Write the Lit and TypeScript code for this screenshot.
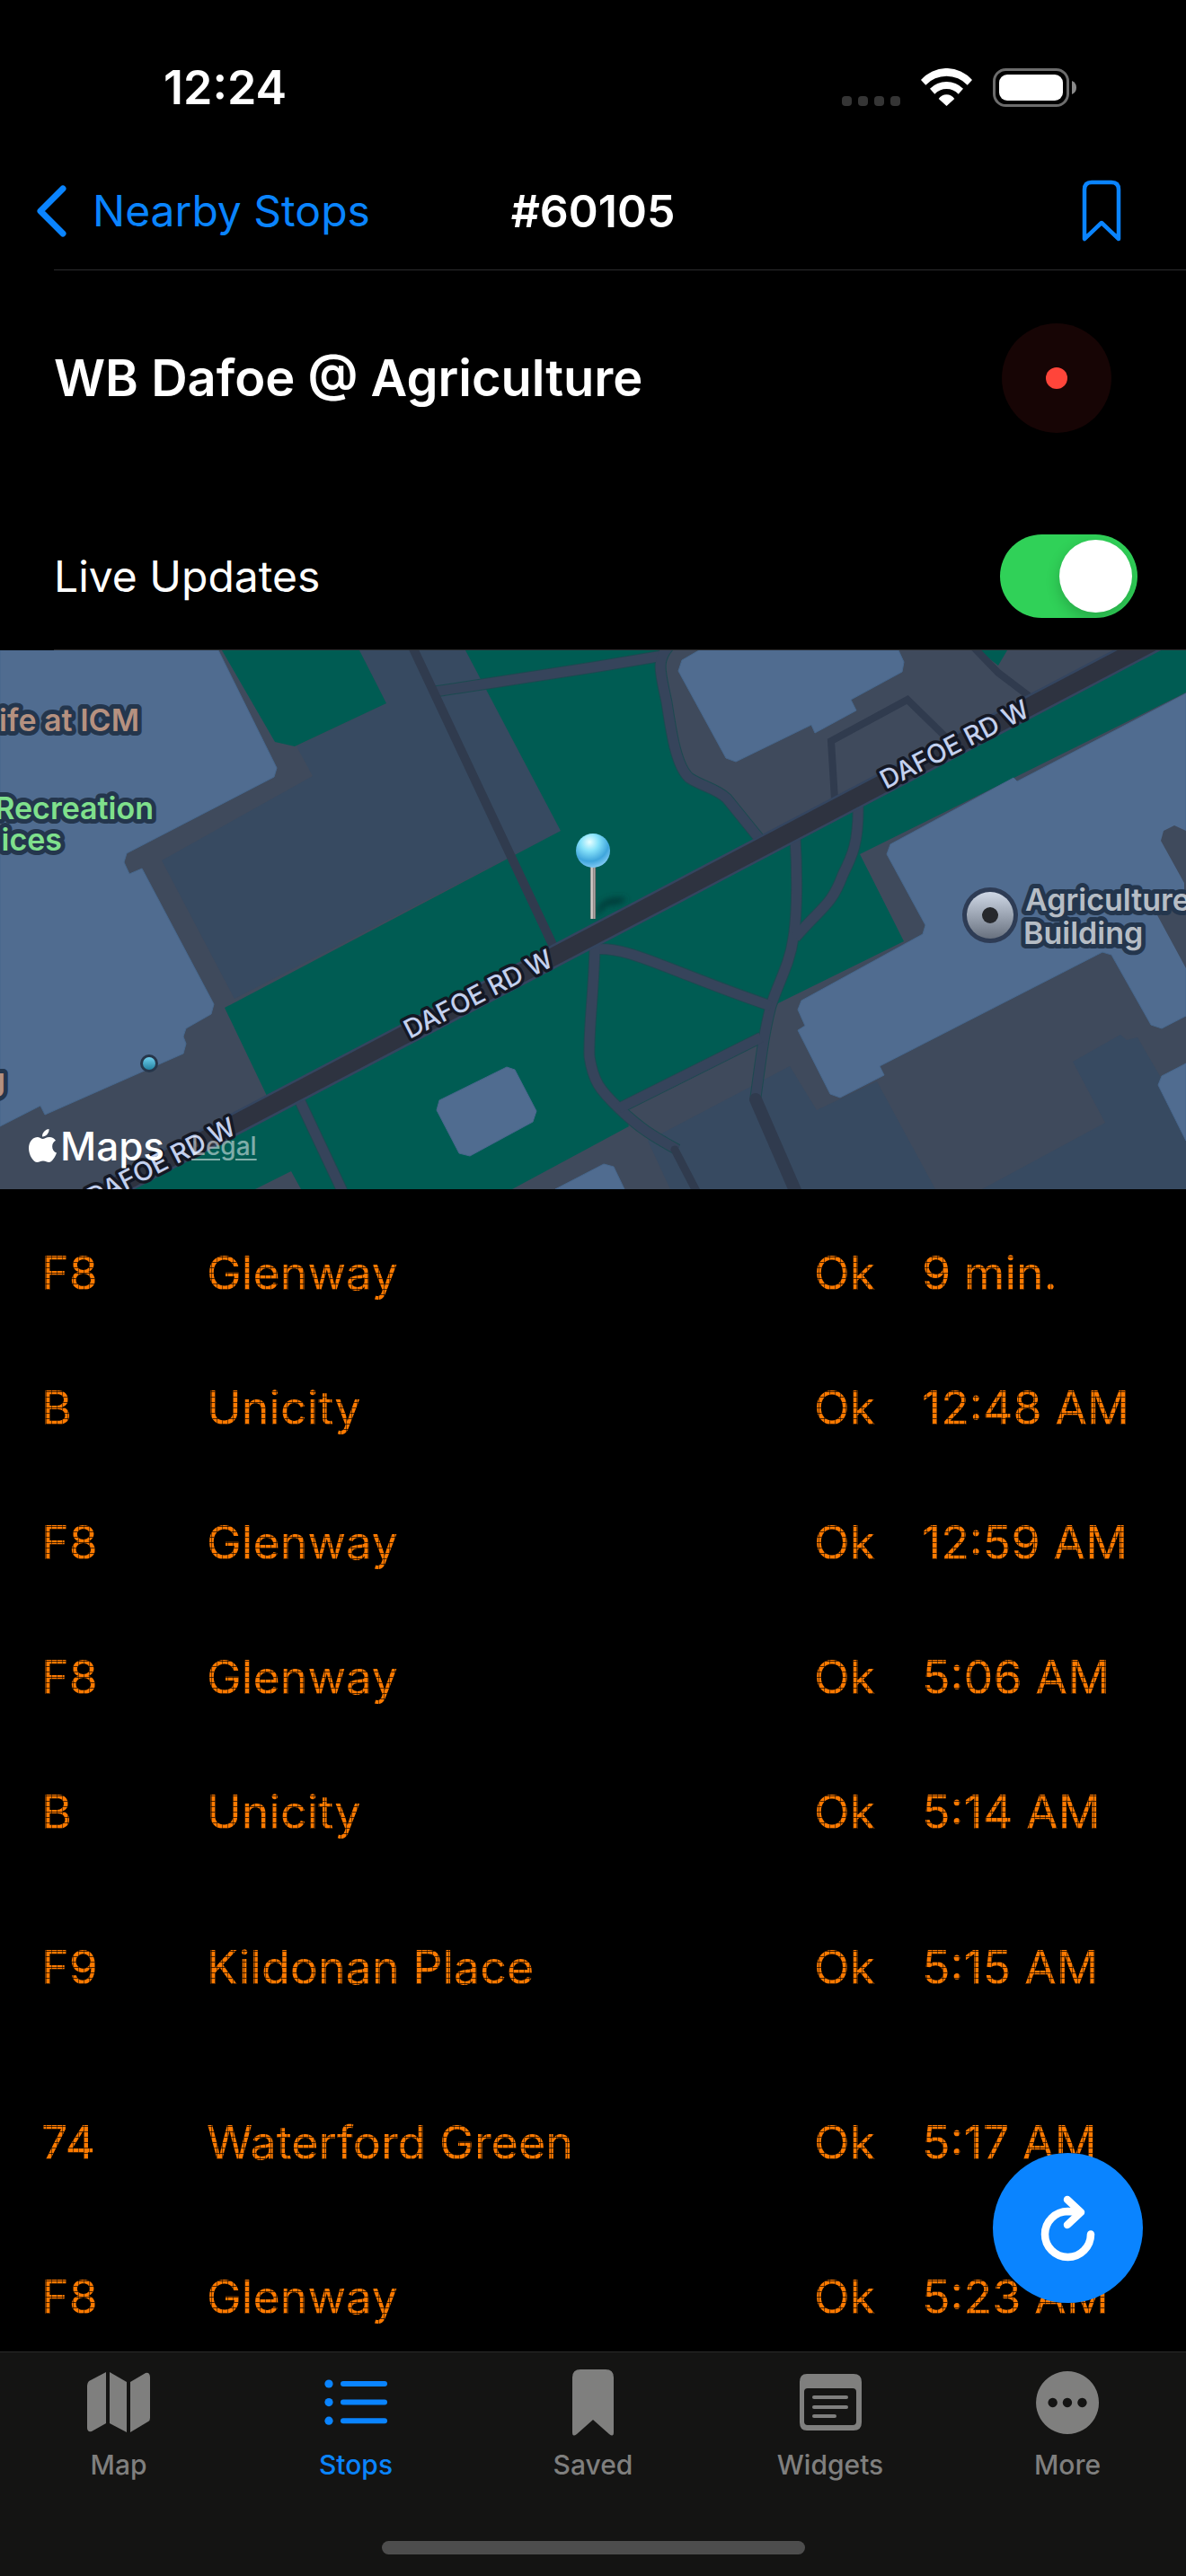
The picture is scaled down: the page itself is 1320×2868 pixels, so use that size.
import { LitElement, html, svg, css } from 'lit';
import { customElement, property, state } from 'lit/decorators.js';
import { classMap } from 'lit/directives/class-map.js';

interface Arrival {
  route: string;
  destination: string;
  status: string;
  time: string;
  tall?: boolean;
}

const arrivals: Arrival[] = [
  { route: 'F8', destination: 'Glenway', status: 'Ok', time: '9 min.' },
  { route: 'B', destination: 'Unicity', status: 'Ok', time: '12:48 AM' },
  { route: 'F8', destination: 'Glenway', status: 'Ok', time: '12:59 AM' },
  { route: 'F8', destination: 'Glenway', status: 'Ok', time: '5:06 AM' },
  { route: 'B', destination: 'Unicity', status: 'Ok', time: '5:14 AM' },
  { route: 'F9', destination: 'Kildonan Place', status: 'Ok', time: '5:15 AM', tall: true },
  { route: '74', destination: 'Waterford Green', status: 'Ok', time: '5:17 AM', tall: true },
  { route: 'F8', destination: 'Glenway', status: 'Ok', time: '5:23 AM' },
];

const tabs = [
  {
    name: 'Map',
    icon: svg`
      <path d="M1 20 Q1 17 3 15 L22 5 V62 L6 71 Q1 72 1 67 Z" />
      <path d="M26 5 L45 16 V72 L26 62 Z" />
      <path d="M49 16 L66 6 Q71 5 71 11 V56 Q71 59 69 60 L49 72 Z" />
    `,
  },
  {
    name: 'Stops',
    icon: svg`
      <circle cx="6" cy="18" r="4.6" /><rect x="19" y="15" width="52" height="6" rx="3" />
      <circle cx="6" cy="38.6" r="4.6" /><rect x="19" y="35.6" width="52" height="6" rx="3" />
      <circle cx="6" cy="59.2" r="4.6" /><rect x="19" y="56.2" width="52" height="6" rx="3" />
    `,
  },
  {
    name: 'Saved',
    icon: svg`<path d="M13 11 Q13 2 22 2 H50 Q59 2 59 11 V72 Q59 78 54 74 L36 58 L18 74 Q13 78 13 72 Z" />`,
  },
  {
    name: 'Widgets',
    icon: svg`
      <path fill-rule="evenodd" d="M10 7 H62 Q71 7 71 16 V61 Q71 70 62 70 H10 Q2 70 2 61 V16 Q2 7 10 7 Z
        M11 23 Q7 23 7 27 V60 Q7 64 11 64 H61 Q65 64 65 60 V27 Q65 23 61 23 Z" />
      <rect x="16" y="31" width="40" height="4" rx="2" />
      <rect x="16" y="42" width="40" height="4" rx="2" />
      <rect x="16" y="52" width="27" height="4" rx="2" />
    `,
  },
  {
    name: 'More',
    icon: svg`
      <path fill-rule="evenodd" d="M36 4 a35 35 0 1 0 0.1 0 Z
        M19.7 33.8 a5.2 5.2 0 1 1 -0.1 0 Z M36 33.8 a5.2 5.2 0 1 1 -0.1 0 Z M52.5 33.8 a5.2 5.2 0 1 1 -0.1 0 Z" />
    `,
  },
];

@customElement('status-bar')
class StatusBar extends LitElement {
  static styles = css`
    :host {
      display: flex;
      align-items: center;
      height: 64px;
      padding: 66px 120px 40px 182px;
      color: #fff;
    }

    .time {
      font-size: 52px;
      font-weight: 600;
      line-height: 64px;
      margin-right: auto;
    }

    svg {
      display: block;
    }
  `;

  render() {
    return html`
      <span class="time">12:24</span>
      <svg width="264" height="44" viewBox="0 0 264 44" aria-hidden="true">
        <g fill="#353535">
          <rect x="1" y="31" width="11" height="11" rx="4" />
          <rect x="19" y="31" width="11" height="11" rx="4" />
          <rect x="37" y="31" width="11" height="11" rx="4" />
          <rect x="55" y="31" width="11" height="11" rx="4" />
        </g>
        <g fill="#fff">
          <path d="M89 13 A37.700 37.700 0 0 1 146 13 L140.700 18.700 A31.900 31.900 0 0 0 94.300 18.700 Z" />
          <path d="M99 22.700 A26 26 0 0 1 136 22.700 L130.700 28.700 A18.100 18.100 0 0 0 104.300 28.700 Z" />
          <path d="M108.700 34 A10.500 10.500 0 0 1 126.300 34 L117.500 42 Z" />
          <rect x="176" y="7" width="71" height="29" rx="9" />
        </g>
        <rect x="170.500" y="1.500" width="82" height="40" rx="13" fill="none" stroke="#6c6c6c" stroke-width="3" />
        <path d="M257 14 Q262 16 262 21.500 Q262 27 257 29 Z" fill="#8a8a8a" />
      </svg>
    `;
  }
}

@customElement('stop-map')
class StopMap extends LitElement {
  static styles = css`
    :host {
      display: block;
      position: relative;
      height: 600px;
      overflow: hidden;
    }

    .canvas {
      display: block;
      width: 100%;
      height: 100%;
    }

    .place,
    .road-name {
      paint-order: stroke;
      stroke-linejoin: round;
    }

    .place {
      font-size: 34px;
      font-weight: 600;
      stroke: #24364d;
      stroke-width: 10px;
    }

    .road-name {
      font-size: 29px;
      font-weight: 500;
      fill: #c3d0ee;
      stroke: #141824;
      stroke-width: 7px;
    }

    .culture {
      fill: #b59180;
    }

    .sport {
      fill: #7fe08c;
    }

    .building {
      fill: #b6bdc5;
    }

    .end {
      text-anchor: end;
    }

    .credits {
      position: absolute;
      left: 32px;
      bottom: 22px;
      display: flex;
      align-items: center;
      color: #fff;
    }

    .brand {
      margin: 0 30px 0 4px;
      font-size: 44px;
      font-weight: 500;
      line-height: 52px;
    }

    .legal {
      color: rgba(255, 255, 255, 0.5);
      font-size: 28px;
      font-weight: 500;
      line-height: 36px;
      text-underline-offset: 4px;
    }
  `;

  render() {
    return html`
      <svg class="canvas" viewBox="0 0 1320 600" preserveAspectRatio="xMidYMid slice" role="img" aria-label="Map of stop 60105">
        <defs>
          <radialGradient id="ball" cx="0.4" cy="0.25" r="0.75">
            <stop offset="0" stop-color="#e8feff" />
            <stop offset="0.35" stop-color="#86e2fa" />
            <stop offset="0.75" stop-color="#3fa5dc" />
            <stop offset="1" stop-color="#7cc8f4" />
          </radialGradient>
          <linearGradient id="needle">
            <stop offset="0" stop-color="#777" />
            <stop offset="0.3" stop-color="#e4dedb" />
            <stop offset="0.6" stop-color="#8a8482" />
            <stop offset="0.8" stop-color="#b5b0ae" />
            <stop offset="1" stop-color="#5b5452" />
          </linearGradient>
          <linearGradient id="marker" x2="0" y2="1">
            <stop offset="0" stop-color="#cfd8e6" />
            <stop offset="1" stop-color="#68717f" />
          </linearGradient>
          <linearGradient id="dot" x2="0" y2="1">
            <stop offset="0" stop-color="#6fd0ee" />
            <stop offset="1" stop-color="#22809f" />
          </linearGradient>
          <filter id="soft" x="-50%" y="-50%" width="200%" height="200%"><feGaussianBlur stdDeviation="3" /></filter>
        </defs>

        <rect width="1320" height="600" fill="#3f4a5c" />

        <!-- plazas -->
        <g fill="#374a61">
          <path d="M400 0 L430 59 L330 107 L348 140 L180 234 L261 388 L624 201 L518 0 Z" />
          <path d="M721 546 L879 463 L909 512 L976 480 L1041 600 L746 600 Z" />
          <path d="M1093 600 L1230 526 L1194 458 L1247 428 L1254 434 L1266 431 L1320 524 V600 Z" />
        </g>

        <!-- lawns -->
        <g fill="#005c53">
          <path d="M247 0 L306 102 L328 107 L430 59 L400 0 Z" />
          <path
            d="M518 0 L624 201 L250 398 L297 496 L130 590 L140 600 H284 L324 580 L335 600 H570 L700 530 L691 508 L844 434 L866 393
              L1006 324 L957 227 L1320 47 V0 H1277 L847 219 L807 163 L767 145 L750 102 L736 30 L740 0 Z"
          />
          <path d="M1089 0 L1111 17 L1121 0 Z" />
        </g>

        <!-- buildings -->
        <g fill="#506c90" stroke="#47678c" stroke-width="1">
          <path
            d="M0 0 H243 L308 131 L305 141 L141 226 L138 236 L144 249 L158 243 L238 394 L235 405 L207 421 L204 430 L207 438 L204 449
              L50 517 L45 507 L0 530 Z"
          />
          <path
            d="M778 0 L759 11 L755 23 L808 120 L819 124 L903 83 L907 92 L953 67 L947 55 L1004 24 L1006 13 L1000 0 Z"
          />
          <path
            d="M1320 48 L1132 146 L1128 142 L991 216 L987 227 L1030 306 L1027 316 L892 390 L888 400 L896 418 L888 423 L924 494 L935 498
              L984 473 L979 463 L1227 336 L1237 339 L1281 417 L1293 421 L1320 407 Z"
          />
          <path d="M1320 460 L1293 474 L1289 484 L1320 546 Z" />
          <path d="M618 600 L672 572 L683 575 L695 600 Z" />
          <path d="M564 464 L573 467 L597 513 L593 525 L523 563 L511 560 L486 512 L489 501 Z" />
        </g>
        <path d="M1292 212 L1295 201 L1307 195 L1320 201 V354 L1287 293 L1318 275 L1318 259 Z" fill="#3f4a5c" />

        <!-- footpaths, edge first and surface on top -->
        ${['#1c4a50', '#36445b'].map(
          (color, i) => svg`
            <g fill="none" stroke=${color} stroke-width=${i ? 11 : 13} stroke-linejoin="round">
              <path d="M484 46 L660 19 L738 6" />
              <path d="M744 -4 C730 12 735 24 742 58 C747 90 752 128 767 142 C782 152 796 153 809 165 L847 212" />
              <path d="M885 209 C887 240 888 290 883 320 C879 350 866 370 858 396 C852 420 850 430 841 498" />
              <path d="M955 170 C956 215 948 230 938 250 C925 285 915 285 885 320" />
              <path d="M658 333 C700 328 740 356 858 396" />
              <path d="M662 330 C661 380 655 420 656 452 C660 480 668 490 689 510 C712 532 725 540 754 556" />
              <path d="M689 510 L847 431" />
              <path d="M333 500 L381 602" />
            </g>
          `
        )}
        <g fill="none" stroke="#303b4e" stroke-linecap="round">
          <path d="M459 -4 L617 332" stroke-width="10" />
          <path d="M841 500 L887 606" stroke-width="14" />
          <path d="M751 556 L776 604" stroke-width="9" />
          <path d="M929 166 L925 101 L1010 55 L1054 98" stroke-width="8" />
          <path d="M1083 -4 L1111 25 L1144 50" stroke-width="8" />
        </g>

        <!-- Dafoe Road -->
        <path d="M87 619 L1290 -13" stroke="#34455f" stroke-width="25" />
        <path d="M87 619 L1290 -13" stroke="#2e3340" stroke-width="20" />
        <g class="road-name">
          <text transform="translate(456 433) rotate(-27)">DAFOE RD W</text>
          <text transform="translate(986 155) rotate(-27)">DAFOE RD W</text>
          <text transform="translate(103 620) rotate(-27)">DAFOE RD W</text>
        </g>

        <g class="place">
          <g class="culture end">
            <text x="155" y="90">ife at ICM</text>
            <text x="6" y="490">g</text>
          </g>
          <g class="sport end">
            <text x="171" y="188">Recreation</text>
            <text x="69" y="223">ices</text>
          </g>
          <g class="building">
            <text x="1141" y="290">Agriculture</text>
            <text x="1139" y="327">Building</text>
          </g>
        </g>

        <circle cx="1102" cy="295" r="31" fill="#2e3c55" />
        <circle cx="1102" cy="295" r="26" fill="url(#marker)" />
        <circle cx="1102" cy="295" r="9" fill="#26282c" />
        <circle cx="166" cy="460" r="10" fill="#26364a" />
        <circle cx="166" cy="460" r="7" fill="url(#dot)" />

        <!-- pin -->
        <path d="M662 297 L668 282 Q680 272 697 276 Q694 284 677 284 Z" fill="#003d3a" filter="url(#soft)" />
        <rect x="657" y="238" width="6" height="61" fill="url(#needle)" />
        <circle cx="660" cy="223" r="19" fill="url(#ball)" />
      </svg>
      <div class="credits">
        <svg width="31" height="38" viewBox="0 0 31 38" fill="#fff" aria-hidden="true">
          <path
            d="M15.500 11 C17.500 11 19.500 9 23 9 C26 9 28.500 10.600 30 12.800 C24.500 16 25 24 31 26.600 C29.500 31 26 37 22.500 37
              C20 37 18.800 35.600 16 35.600 C13 35.600 11.700 37 9.500 37 C5 37 0 29 0 21.500 C0 13.500 5 9 9.500 9 C12 9 14 11 15.500 11 Z"
          />
          <path d="M15 8.500 C14.800 4 18.500 0.300 22.500 0 C23 4.500 19 8.700 15 8.500 Z" />
        </svg>
        <span class="brand">Maps</span>
        <a class="legal" href="#legal">Legal</a>
      </div>
    `;
  }
}

@customElement('arrival-board')
class ArrivalBoard extends LitElement {
  @property({ attribute: false }) arrivals: Arrival[] = [];

  static styles = css`
    :host {
      display: block;
      padding: 19px 0 0 46px;
    }

    table {
      width: 100%;
      table-layout: fixed;
      border-collapse: collapse;
      text-align: left;
    }

    td {
      height: 150px;
      padding: 0;
      vertical-align: middle;
    }

    .tall td {
      height: 195px;
    }

    .route {
      width: 184px;
    }

    .status {
      width: 120px;
    }

    .time {
      width: 294px;
    }

    /* LED matrix look: the text is a window onto a grid of lit dots */
    .led {
      display: inline-block;
      font: 400 52px/60px Inter, sans-serif;
      white-space: nowrap;
      color: transparent;
      background:
        repeating-linear-gradient(90deg, transparent 0 5px, rgba(0, 0, 0, 0.5) 5px 6px),
        repeating-linear-gradient(transparent 0 5px, rgba(0, 0, 0, 0.7) 5px 6px),
        #ff7a00;
      -webkit-background-clip: text;
      background-clip: text;
    }
  `;

  render() {
    return html`
      <table aria-label="Arrivals">
        <colgroup>
          <col class="route" />
          <col />
          <col class="status" />
          <col class="time" />
        </colgroup>
        <tbody>
          ${this.arrivals.map(
            (a) => html`
              <tr class=${classMap({ tall: !!a.tall })}>
                <td><span class="led">${a.route}</span></td>
                <td><span class="led">${a.destination}</span></td>
                <td><span class="led">${a.status}</span></td>
                <td><span class="led">${a.time}</span></td>
              </tr>
            `
          )}
        </tbody>
      </table>
    `;
  }
}

@customElement('tab-bar')
class TabBar extends LitElement {
  @property() active = 'Stops';

  static styles = css`
    :host {
      display: block;
      background: #141413;
      border-top: 1px solid #2a2b2b;
    }

    nav {
      display: grid;
      grid-template-columns: repeat(5, 1fr);
      padding-top: 17px;
    }

    button {
      display: flex;
      flex-direction: column;
      align-items: center;
      gap: 14px;
      padding: 0;
      border: 0;
      background: none;
      color: #7f7f7e;
      font: 500 30px/36px Inter, sans-serif;
    }

    .active {
      color: #0a84ff;
    }

    svg {
      fill: currentColor;
    }

    .home {
      width: 471px;
      height: 15px;
      margin: 67px auto 24px;
      border-radius: 8px;
      background: #4d4d4d;
    }
  `;

  render() {
    return html`
      <nav>
        ${tabs.map(
          (tab) => html`
            <button class=${classMap({ active: tab.name === this.active })} @click=${() => (this.active = tab.name)}>
              <svg width="72" height="76" viewBox="0 0 72 76" aria-hidden="true">${tab.icon}</svg>
              ${tab.name}
            </button>
          `
        )}
      </nav>
      <div class="home"></div>
    `;
  }
}

@customElement('app-root')
class AppRoot extends LitElement {
  @state() live = true;

  static styles = css`
    :host {
      position: relative;
      display: flex;
      flex-direction: column;
      height: 100vh;
      overflow: hidden;
      background: #000;
      color: #fff;
      font-family: Inter, 'Liberation Sans', sans-serif;
    }

    button {
      padding: 0;
      border: 0;
      background: none;
      color: #0a84ff;
      font: inherit;
    }

    .nav {
      display: grid;
      grid-template-columns: 1fr auto 1fr;
      align-items: center;
      height: 130px;
      padding: 0 40px;
      font-size: 48px;
      line-height: 60px;
    }

    .back {
      display: flex;
      align-items: center;
      gap: 28px;
      justify-self: start;
      white-space: nowrap;
    }

    .nav h1 {
      margin: 0;
      font-size: 50px;
      font-weight: 600;
    }

    .save {
      justify-self: end;
      margin-right: 32px;
    }

    .nav svg {
      display: block;
    }

    .line {
      height: 1px;
      margin-left: 60px;
      background: #2c2c2e;
    }

    .stop,
    .live {
      display: flex;
      align-items: center;
      justify-content: space-between;
    }

    .stop {
      padding: 59px 83px 77px 60px;
    }

    .stop h2 {
      margin: 0;
      font-size: 56px;
      font-weight: 600;
      line-height: 68px;
    }

    .beacon {
      display: grid;
      place-items: center;
      width: 122px;
      height: 122px;
      border-radius: 50%;
      background: #170505;
    }

    .beacon::after {
      content: '';
      width: 24px;
      height: 24px;
      border-radius: 50%;
      background: #ff453a;
    }

    .live {
      padding: 36px 54px 35px 60px;
      font-size: 48px;
      line-height: 60px;
    }

    .switch {
      appearance: none;
      display: flex;
      width: 153px;
      height: 93px;
      margin: 0;
      padding: 6px;
      box-sizing: border-box;
      border-radius: 47px;
      background: #39393d;
    }

    .switch::before {
      content: '';
      width: 81px;
      height: 81px;
      border-radius: 50%;
      background: #fff;
      box-shadow: 0 6px 16px rgba(0, 0, 0, 0.2);
    }

    .switch:checked {
      justify-content: flex-end;
      background: #30d158;
    }

    main {
      position: relative;
      flex: 1;
      min-height: 0;
      overflow: hidden;
    }

    .refresh {
      position: absolute;
      right: 48px;
      bottom: 54px;
      width: 167px;
      height: 167px;
      border-radius: 50%;
      background: #0a84ff;
    }

    .refresh svg {
      display: block;
    }
  `;

  render() {
    return html`
      <status-bar></status-bar>
      <header class="nav">
        <button class="back">
          <svg width="35" height="58" viewBox="0 0 35 58" fill="none" stroke="#0a84ff" stroke-width="7" stroke-linecap="round" stroke-linejoin="round">
            <path d="M30 4 L5 29 L30 54" />
          </svg>
          Nearby Stops
        </button>
        <h1>#60105</h1>
        <button class="save" aria-label="Save stop">
          <svg width="44" height="70" viewBox="0 0 44 70" fill="none" stroke="#0a84ff" stroke-width="4.500" stroke-linejoin="round">
            <path d="M3 11 Q3 3 11 3 H33 Q41 3 41 11 V66 L22 48 L3 66 Z" />
          </svg>
        </button>
      </header>
      <main>
        <div class="line"></div>
        <section class="stop">
          <h2>WB Dafoe @ Agriculture</h2>
          <div class="beacon"></div>
        </section>
        <section class="live">
          <label for="live">Live Updates</label>
          <input
            id="live"
            class="switch"
            type="checkbox"
            role="switch"
            .checked=${this.live}
            @change=${() => (this.live = !this.live)}
          />
        </section>
        <div class="line"></div>
        <stop-map></stop-map>
        <arrival-board .arrivals=${arrivals}></arrival-board>
        <button class="refresh" aria-label="Refresh">
          <svg width="167" height="167" viewBox="0 0 167 167" fill="none" stroke="#fff" stroke-width="8.500" stroke-linecap="round" stroke-linejoin="round">
            <path d="M109 90.500 A25.500 25.500 0 1 1 83.500 65 L96 66" />
            <path d="M83 52 L98 66 L83 80" />
          </svg>
        </button>
      </main>
      <tab-bar></tab-bar>
    `;
  }
}
